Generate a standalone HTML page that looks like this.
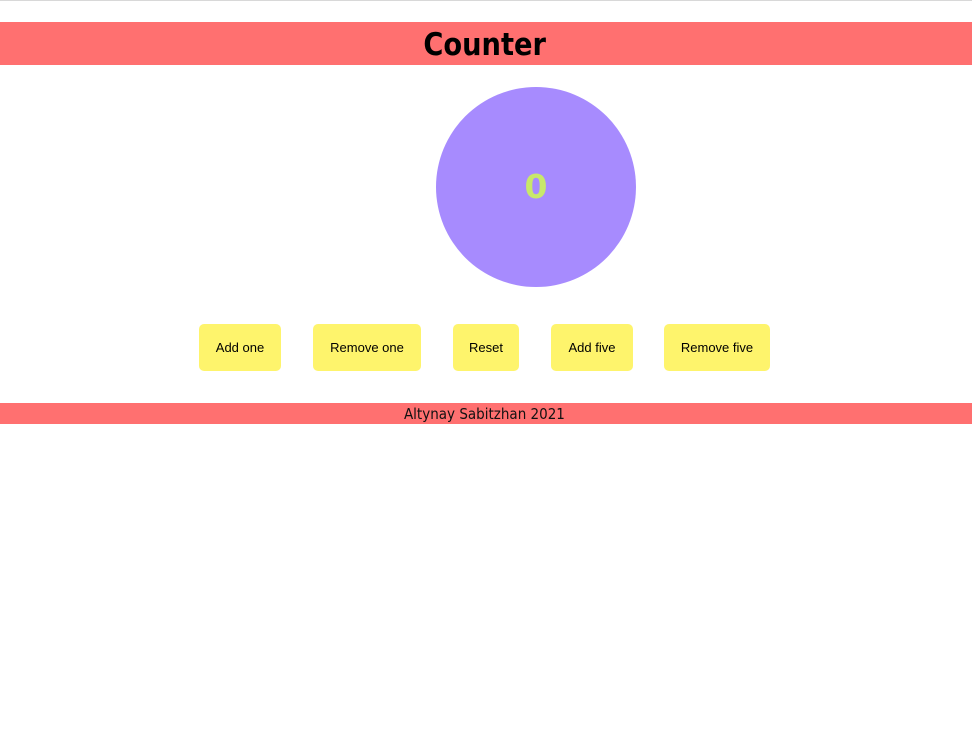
<!DOCTYPE html>
<html><head><style>
body{margin:0;width:972px;height:747px;background:#fff;position:relative;font-family:"Liberation Sans",sans-serif;overflow:hidden}
.top{position:absolute;left:0;top:0;width:972px;height:1px;background:#d8d8d8}
.hd{position:absolute;left:0;top:22px;width:972px;height:43px;background:#ff7070;text-align:center;font-weight:bold;font-size:31px;line-height:46px;color:#000;font-family:"DejaVu Sans","Liberation Sans",sans-serif}
.hd span{display:inline-block;transform:scaleX(0.88);margin-left:-3px}
.c{position:absolute;left:436px;top:87px;width:200px;height:200px;border-radius:50%;background:#a78bfe;color:#c8e86a;font-weight:bold;font-size:33px;text-align:center;line-height:200px;font-family:"DejaVu Sans",sans-serif}
.b{position:absolute;top:324px;height:47px;background:#fef46c;border-radius:5px;font-size:13px;line-height:47px;text-align:center;color:#000}
.ft{position:absolute;left:0;top:403px;width:972px;height:21px;background:#ff7070;text-align:center;font-size:15px;line-height:23px;color:#111;font-family:"DejaVu Sans",sans-serif}
</style></head><body>
<div class="top"></div>
<div class="hd"><span>Counter</span></div>
<div class="c">0</div>
<div class="b" style="left:199px;width:82px">Add one</div>
<div class="b" style="left:313px;width:108px">Remove one</div>
<div class="b" style="left:453px;width:66px">Reset</div>
<div class="b" style="left:551px;width:82px">Add five</div>
<div class="b" style="left:664px;width:106px">Remove five</div>
<div class="ft"><span style="display:inline-block;transform:scaleX(0.9);margin-left:-4px">Altynay Sabitzhan 2021</span></div>
</body></html>
